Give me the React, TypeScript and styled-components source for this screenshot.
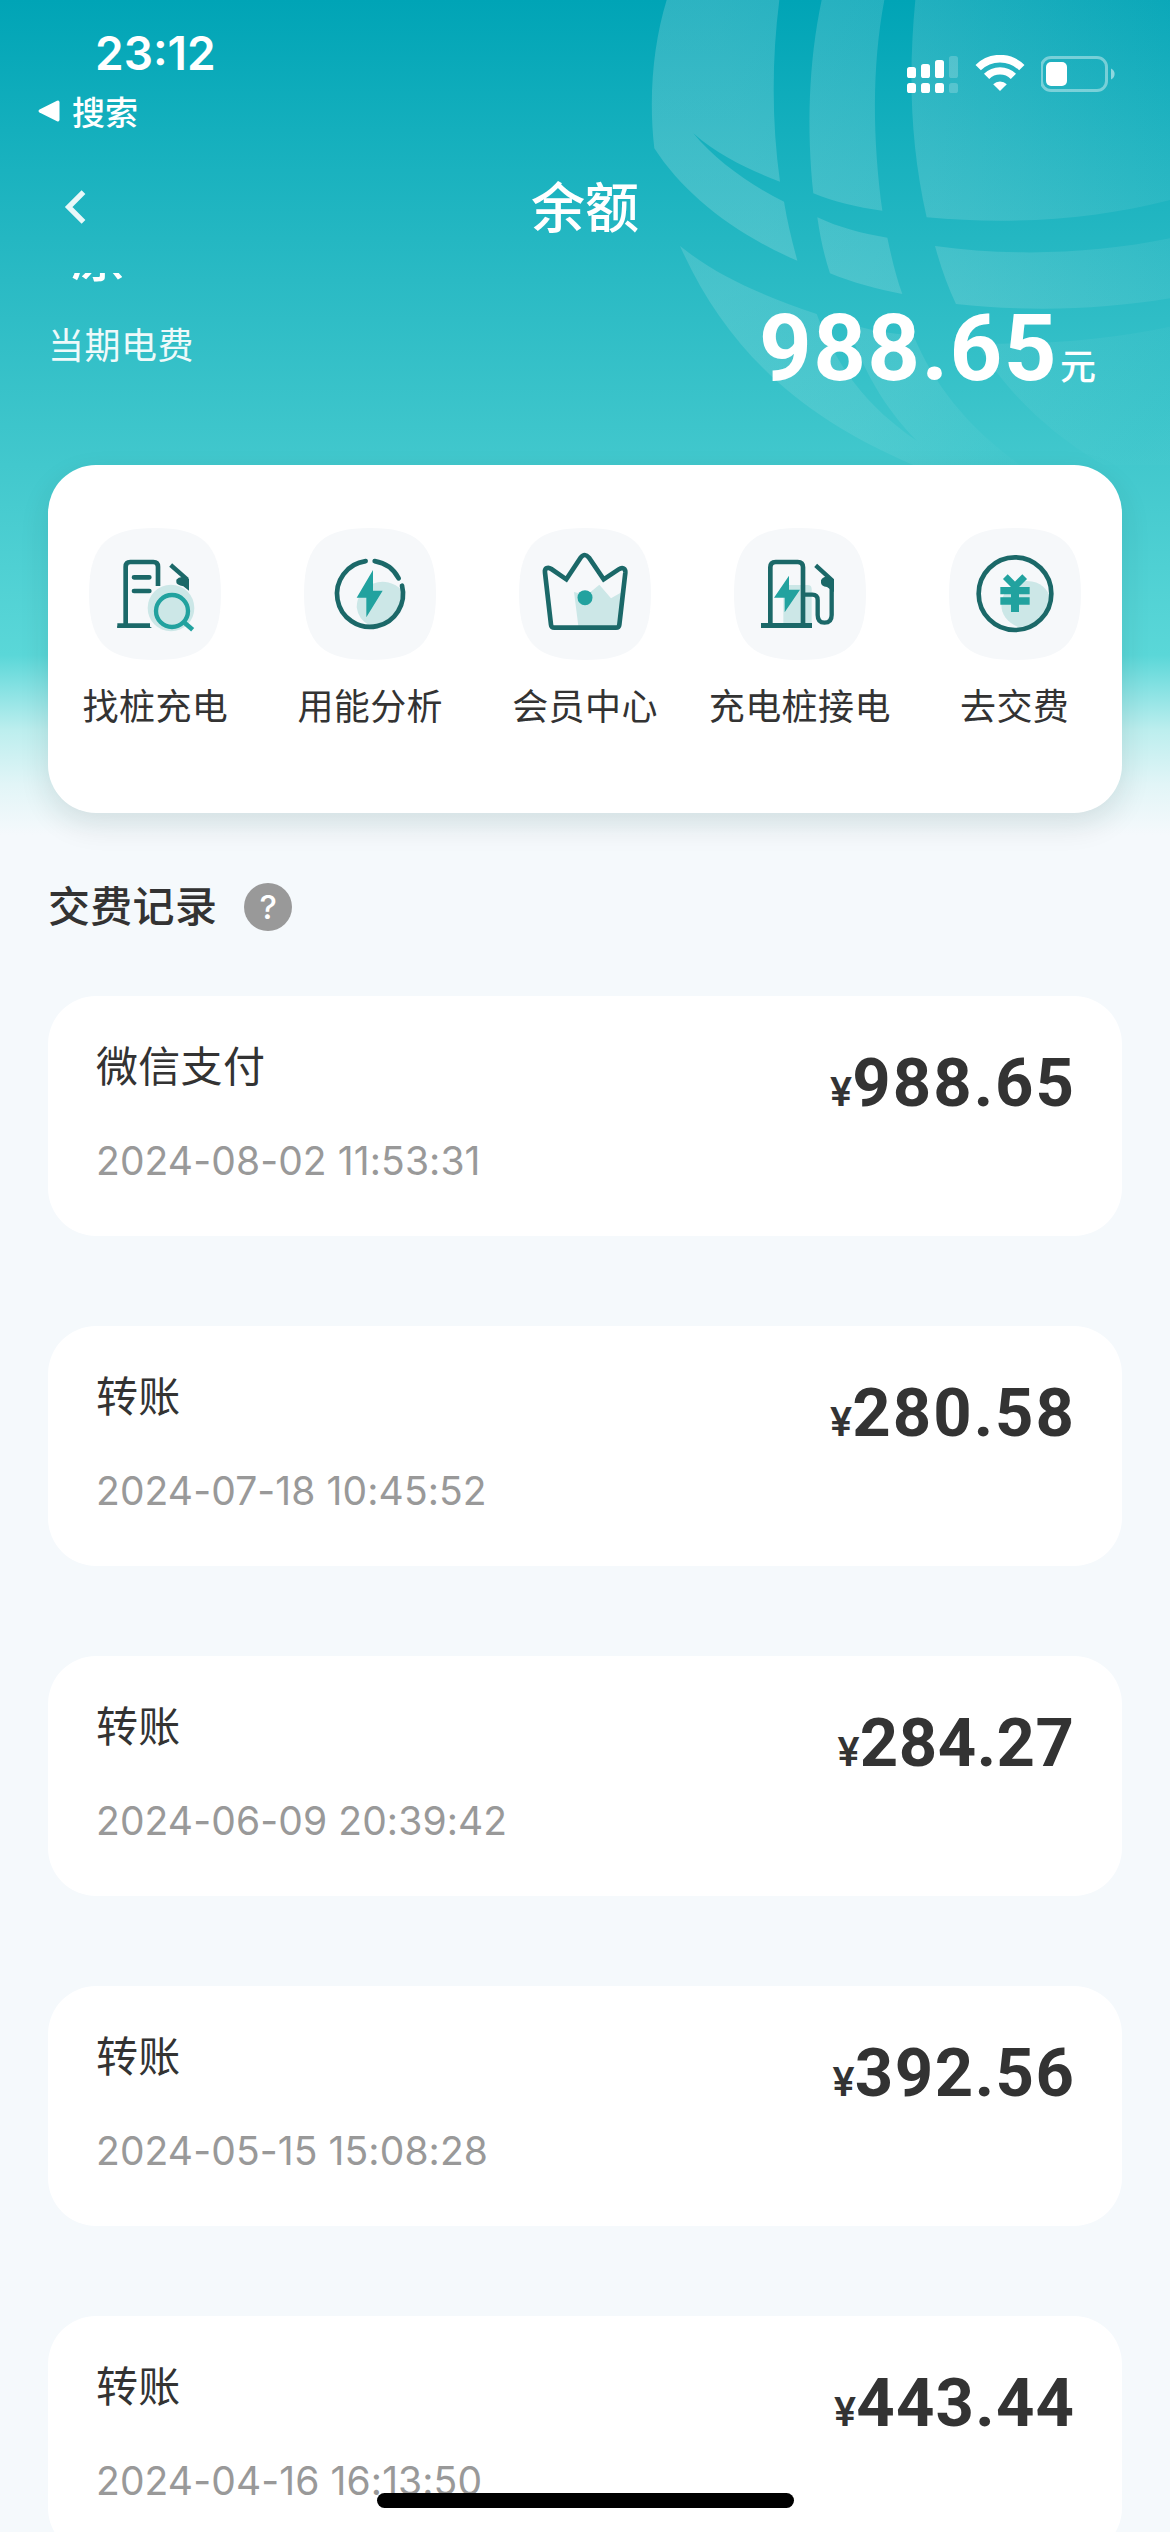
import React from "react";
import styled, { createGlobalStyle } from "styled-components";

const GlobalStyle = createGlobalStyle`
  * { box-sizing: border-box; }
  body { margin: 0; background: #f5f9fc; }
`;

const cjk = `"Noto Sans CJK SC", sans-serif`;
const latin = `Inter, "Noto Sans CJK SC", sans-serif`;
const numeric = `Roboto, "Noto Sans CJK SC", sans-serif`;

const Screen = styled.div`
  position: relative;
  display: flex;
  flex-direction: column;
  width: 1170px;
  height: 2532px;
  overflow: hidden;
  font-family: ${cjk};
  color: #333;
  background: linear-gradient(
      180deg,
      #00a4b6 0px,
      #14afbd 130px,
      #2abac4 280px,
      #42c8cd 465px,
      #5ad7d8 655px,
      #88e2e3 690px,
      #bceeee 730px,
      #e2f5f7 785px,
      #f5f9fc 835px
    )
    #f5f9fc;
`;

const GlobeArt = styled.svg`
  position: absolute;
  top: 0;
  right: 0;
  width: 520px;
  height: 465px;
`;

const Header = styled.header`
  position: relative;
  display: flex;
  flex-direction: column;
  flex: none;
  height: 273px;
  color: #fff;
`;

const StatusBar = styled.div`
  display: flex;
  justify-content: space-between;
  height: 141px;
  padding: 23px 53px 0 38px;
`;

const ClockGroup = styled.div`
  display: flex;
  flex-direction: column;
`;

const Clock = styled.div`
  padding-left: 57px;
  font: 600 46px/60px ${latin};
`;

const BackToSearch = styled.div`
  display: flex;
  align-items: center;
  gap: 12px;
  font-size: 33px;
  font-weight: 500;
  line-height: 56px;
`;

const Indicators = styled.div`
  display: flex;
  gap: 16px;
  height: 40px;
  margin-top: 32px;
`;

const NavBar = styled.div`
  display: grid;
  grid-template-columns: 150px 1fr 150px;
  align-items: center;
  height: 132px;
`;

const BackButton = styled.button`
  display: flex;
  width: 60px;
  height: 60px;
  margin-left: 45px;
  align-items: center;
  justify-content: center;
  padding: 0;
  border: 0;
  background: none;
`;

const Title = styled.h1`
  margin: -5px 0 0;
  font-size: 54px;
  font-weight: 500;
  line-height: 80px;
  text-align: center;
`;

const Scroll = styled.main`
  position: relative;
  flex: 1;
  min-height: 0;
  overflow: hidden;
  padding: 0 48px;
`;

const AccountName = styled.div`
  height: 54px;
  margin-top: -46px;
  padding-left: 23px;
  color: #fff;
  font-size: 54px;
  font-weight: 500;
  line-height: 54px;
`;

const BalanceRow = styled.div`
  display: flex;
  justify-content: space-between;
  height: 184px;
  padding: 14px 26px 0 0;
  color: #fff;
`;

const BalanceLabel = styled.div`
  padding-top: 21px;
  font-size: 36px;
  line-height: 54px;
  letter-spacing: 0.5px;
  opacity: 0.92;
`;

const Balance = styled.div`
  display: flex;
  align-items: baseline;
  font: 700 92px/108px ${numeric};
  letter-spacing: 1.4px;
`;

const Unit = styled.span`
  margin-left: 2px;
  font: 500 36px/54px ${cjk};
  letter-spacing: 0;
`;

const Shortcuts = styled.nav`
  display: grid;
  grid-template-columns: repeat(5, 1fr);
  height: 348px;
  padding-top: 63px;
  border-radius: 48px;
  background: #fff;
  box-shadow: 0 12px 30px rgba(0, 40, 40, 0.11);
`;

const Shortcut = styled.a`
  display: flex;
  flex-direction: column;
  align-items: center;
  gap: 17px;
`;

const Tile = styled.svg`
  width: 132px;
  height: 132px;
`;

const ShortcutLabel = styled.span`
  font-size: 36px;
  line-height: 54px;
  letter-spacing: 0.4px;
  white-space: nowrap;
`;

const SectionHead = styled.div`
  display: flex;
  align-items: center;
  gap: 27px;
  height: 48px;
  margin: 70px 0 65px;
`;

const SectionTitle = styled.h2`
  margin: -6px 0 0;
  font-size: 42px;
  font-weight: 500;
  line-height: 48px;
  letter-spacing: 0.3px;
`;

const Help = styled.span`
  display: flex;
  align-items: center;
  justify-content: center;
  width: 48px;
  height: 48px;
  border-radius: 50%;
  background: #999;
  color: #fff;
  font: 500 33px/48px ${latin};
`;

const Records = styled.div`
  display: flex;
  flex-direction: column;
  gap: 90px;
`;

const Record = styled.article`
  display: flex;
  justify-content: space-between;
  height: 240px;
  padding: 38px 48px 0;
  border-radius: 48px;
  background: #fff;
`;

const RecordInfo = styled.div`
  display: flex;
  flex-direction: column;
  gap: 37px;
`;

const Method = styled.div`
  font-size: 42px;
  line-height: 60px;
  letter-spacing: 0.3px;
`;

const When = styled.time`
  font: 400 39px/60px ${latin};
  letter-spacing: 0.1px;
  color: #999;
`;

const Amount = styled.div<{ $tracking: number }>`
  display: flex;
  align-items: baseline;
  height: 80px;
  padding-top: 9px;
  font: 700 67px/80px ${numeric};
  letter-spacing: ${(p) => p.$tracking}px;
  margin-right: ${(p) => -p.$tracking}px;
`;

const Currency = styled.span`
  font: 600 40px/60px ${latin};
  letter-spacing: 0;
`;

const HomeIndicator = styled.div`
  position: absolute;
  left: 377px;
  bottom: 24px;
  width: 417px;
  height: 15px;
  border-radius: 8px;
  background: #000;
`;

const DARK = "#1b6868";
const TEAL = "#22a29f";
const PALE = "#cce7e7";

const Globe = () => (
  <GlobeArt viewBox="0 0 1560 1395">
    <defs>
      <linearGradient id="sheen" gradientUnits="userSpaceOnUse" x1="300" y1="500" x2="1600" y2="200">
        <stop offset="0" stopColor="#e0f0f0" stopOpacity="0.2" />
        <stop offset="0.4" stopColor="#e0f0f0" stopOpacity="0.16" />
        <stop offset="1" stopColor="#e0f0f0" stopOpacity="0.05" />
      </linearGradient>
      <linearGradient id="sheenLow" gradientUnits="userSpaceOnUse" x1="300" y1="800" x2="1000" y2="1450">
        <stop offset="0" stopColor="#e0f0f0" stopOpacity="0.16" />
        <stop offset="0.6" stopColor="#e0f0f0" stopOpacity="0.1" />
        <stop offset="1" stopColor="#e0f0f0" stopOpacity="0.02" />
      </linearGradient>
      <linearGradient id="sheenCorner" gradientUnits="userSpaceOnUse" x1="980" y1="1000" x2="1400" y2="1395">
        <stop offset="0" stopColor="#e0f0f0" stopOpacity="0.09" />
        <stop offset="1" stopColor="#e0f0f0" stopOpacity="0.01" />
      </linearGradient>
    </defs>
    <g fill="url(#sheen)">
      <path d="M50 0C10 130-5 290 13 445C100 580 250 700 442 782C425 720 412 665 402 605C300 555 195 480 130 400C210 470 300 510 390 545C365 370 365 180 388 0Z" />
      <path d="M515 0C475 190 470 390 490 580C550 605 620 622 697 632C668 420 665 200 703 0Z" />
      <path d="M796 0C775 220 780 430 830 652C1080 675 1330 660 1560 600V0Z" />
      <path d="M502 652C565 682 640 702 712 713C725 775 738 830 757 882C680 868 610 848 540 820C522 765 510 710 502 652Z" />
      <path d="M855 738C1090 770 1330 762 1560 715V895C1350 930 1130 935 918 912C893 860 872 800 855 738Z" />
    </g>
    <path fill="url(#sheenLow)" d="M90 738C210 835 350 890 500 942C560 1100 650 1220 800 1322C700 1220 640 1110 590 968C650 990 720 1000 790 1006C850 1150 950 1280 1110 1395H790C450 1250 230 1050 90 738Z" />
    <path fill="url(#sheenCorner)" d="M980 1030C1180 1035 1370 1020 1560 980V1395H1360C1180 1290 1060 1160 980 1030Z" />
  </GlobeArt>
);

const Signal = () => (
  <svg width="52" height="40" viewBox="0 0 52 40" fill="#fff">
    {[[0, 12], [14, 9], [28, 5], [42, 1]].map(([x, y], i) => (
      <g key={x} opacity={i === 3 ? 0.2 : 1}>
        <rect x={x} y={y} width="9" height={23 - y} rx="2.6" />
        <rect x={x} y="28" width="9" height="10" rx="2.6" />
      </g>
    ))}
  </svg>
);

const Wifi = () => (
  <svg width="50" height="40" viewBox="0 0 50 40" fill="none" stroke="#fff">
    <path d="M3.2 12.6A31 31 0 0 1 46.8 12.6" strokeWidth="7.6" />
    <path d="M11.6 21.4A19 19 0 0 1 38.4 21.4" strokeWidth="7.4" />
    <path d="M25 36L18.2 29.2A9.6 9.6 0 0 1 31.8 29.2Z" fill="#fff" stroke="none" />
  </svg>
);

const Battery = () => (
  <svg width="76" height="40" viewBox="0 0 76 40">
    <rect x="0.5" y="2.5" width="65" height="33" rx="9.5" fill="none" stroke="#fff" strokeOpacity="0.4" strokeWidth="3" />
    <rect x="5" y="7" width="21" height="24" rx="5" fill="#fff" />
    <path d="M70 13.6A6 6 0 0 1 70 24.6Z" fill="#fff" fillOpacity="0.5" />
  </svg>
);

const tileShape = (x: number, y: number) =>
  `M${x + 198} ${y}C${x + 330} ${y} ${x + 396} ${y + 40} ${x + 396} ${y + 198}S${x + 330} ${y + 396} ${x + 198} ${y + 396}S${x} ${y + 356} ${x} ${y + 198}S${x + 66} ${y} ${x + 198} ${y}Z`;

const IconTile = ({ x, y, children }: { x: number; y: number; children: React.ReactNode }) => (
  <Tile viewBox={`${x} ${y} 396 396`} fill="none">
    <path d={tileShape(x, y)} fill="#f6f8fa" />
    {children}
  </Tile>
);

const FindIcon = () => (
  <IconTile x={27} y={54}>
    <path d="M137 344V170Q137 156 151 156H220Q234 156 234 170V228" stroke={DARK} strokeWidth="14" />
    <path d="M112 347H206L216 354H112Z" fill={DARK} />
    <path d="M112 347H210" stroke={DARK} strokeWidth="14" />
    <path d="M162 202H208M162 243H208" stroke={DARK} strokeWidth="14" strokeLinecap="round" />
    <path d="M272 165L322 209" stroke={DARK} strokeWidth="13" />
    <path d="M289 209Q295 201 306 201L327 206V242L310 229Q289 225 289 217Z" fill={DARK} />
    <circle cx="273" cy="294" r="70" fill={PALE} />
    <circle cx="276" cy="303" r="48" stroke={TEAL} strokeWidth="13" />
    <path d="M311 336L338 359" stroke={TEAL} strokeWidth="14" />
  </IconTile>
);

const EnergyIcon = () => (
  <IconTile x={673} y={54}>
    <path d="M831 292A78 78 0 0 1 966 240A98 98 0 0 1 868 345A70 70 0 0 1 831 292Z" fill={PALE} />
    <path d="M858 153.500A99 99 0 1 0 967 227" stroke={DARK} strokeWidth="14" strokeLinecap="round" />
    <path d="M885 153.500A99 99 0 0 1 957 205" stroke={DARK} strokeWidth="14" strokeLinecap="round" />
    <path d="M880 180L831 263H860V322L909 242H880Z" fill={TEAL} />
  </IconTile>
);

const CrownIcon = () => (
  <IconTile x={57} y={54}>
    <path d="M222 246L260 256L298 224L333 265L366 246L353 348H235Z" fill={PALE} />
    <path
      d="M135 188C133 174 144 170 154 177L199 208L242 143Q254 127 267 143L311 208L356 178C368 170 377 176 376 188L358 344Q357 353 348 353H163Q154 353 153 344Z"
      stroke={DARK}
      strokeWidth="14"
    />
    <circle cx="255" cy="263" r="22.500" fill={TEAL} />
  </IconTile>
);

const ChargerIcon = () => (
  <IconTile x={699} y={54}>
    <path d="M847 225H920Q932 225 932 238V345H847Z" fill={PALE} />
    <path d="M808 344V172Q808 156 824 156H890Q906 156 906 172V344" stroke={DARK} strokeWidth="14" />
    <path d="M780 346.500H933" stroke={DARK} strokeWidth="15" />
    <path d="M906 254H934Q950 254 950 270V315Q950 338 970.500 338Q992 338 992 315V210L944 166" stroke={DARK} strokeWidth="13" />
    <path d="M960 211Q965 200 976 200L999 208V246L978 231Q960 228 960 218Z" fill={DARK} />
    <path d="M864 197L819 263H851V307L897 239H864Z" fill={TEAL} />
  </IconTile>
);

const PayIcon = () => (
  <IconTile x={54} y={54}>
    <path d="M211 285C212 240 250 213 288 213C330 213 350 240 358 262C354 310 310 348 264 352C228 338 211 312 211 285Z" fill={PALE} />
    <circle cx="252" cy="251" r="109" stroke={DARK} strokeWidth="14" />
    <path d="M223 200L252 229L281 200" stroke={TEAL} strokeWidth="20" />
    <path d="M208 242H296M208 273H296" stroke={TEAL} strokeWidth="22" />
    <path d="M252 226V306" stroke={TEAL} strokeWidth="24" />
  </IconTile>
);

const shortcuts = [
  { label: "找桩充电", Icon: FindIcon },
  { label: "用能分析", Icon: EnergyIcon },
  { label: "会员中心", Icon: CrownIcon },
  { label: "充电桩接电", Icon: ChargerIcon },
  { label: "去交费", Icon: PayIcon },
];

const records = [
  { method: "微信支付", when: "2024-08-02 11:53:31", amount: "988.65", tracking: 2 },
  { method: "转账", when: "2024-07-18 10:45:52", amount: "280.58", tracking: 2 },
  { method: "转账", when: "2024-06-09 20:39:42", amount: "284.27", tracking: 0.5 },
  { method: "转账", when: "2024-05-15 15:08:28", amount: "392.56", tracking: 1.5 },
  { method: "转账", when: "2024-04-16 16:13:50", amount: "443.44", tracking: 1.2 },
];

export default function App() {
  return (
    <>
      <GlobalStyle />
      <Screen>
        <Globe />
        <Header>
          <StatusBar>
            <ClockGroup>
              <Clock>23:12</Clock>
              <BackToSearch>
                <svg width="22" height="22" viewBox="0 0 22 22" fill="#fff">
                  <path d="M1.500 9.500L19 .8Q21.500 0 21.500 2.500V19.500Q21.500 22 19 21.200L1.500 12.500Q-.5 11 1.500 9.500Z" />
                </svg>
                搜索
              </BackToSearch>
            </ClockGroup>
            <Indicators>
              <Signal />
              <Wifi />
              <Battery />
            </Indicators>
          </StatusBar>
          <NavBar>
            <BackButton aria-label="返回">
              <svg width="22" height="34" viewBox="0 0 20 32" fill="none" stroke="#fff" strokeOpacity="0.9" strokeWidth="5">
                <path d="M18 2L4 16L18 30" />
              </svg>
            </BackButton>
            <Title>余额</Title>
          </NavBar>
        </Header>
        <Scroll>
          <AccountName>原</AccountName>
          <BalanceRow>
            <BalanceLabel>当期电费</BalanceLabel>
            <Balance>
              988.65<Unit>元</Unit>
            </Balance>
          </BalanceRow>
          <Shortcuts>
            {shortcuts.map(({ label, Icon }) => (
              <Shortcut key={label}>
                <Icon />
                <ShortcutLabel>{label}</ShortcutLabel>
              </Shortcut>
            ))}
          </Shortcuts>
          <SectionHead>
            <SectionTitle>交费记录</SectionTitle>
            <Help>?</Help>
          </SectionHead>
          <Records>
            {records.map((r) => (
              <Record key={r.when}>
                <RecordInfo>
                  <Method>{r.method}</Method>
                  <When>{r.when}</When>
                </RecordInfo>
                <Amount $tracking={r.tracking}>
                  <Currency>¥</Currency>
                  {r.amount}
                </Amount>
              </Record>
            ))}
          </Records>
        </Scroll>
        <HomeIndicator />
      </Screen>
    </>
  );
}
